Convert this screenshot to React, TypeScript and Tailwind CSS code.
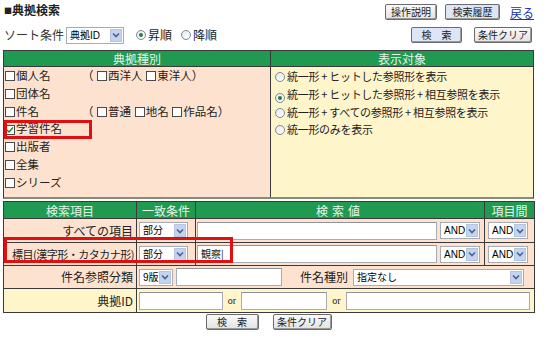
import React from 'react';

const jp = { fontFamily: '"Noto Sans CJK JP", "DejaVu Sans", sans-serif' };
const small = { fontFamily: '"Liberation Sans", "Noto Sans CJK JP", sans-serif' };

function Btn({ label, blue, className = '' }: { label: string; blue?: boolean; className?: string }) {
  return (
    <button
      className={`h-[16px] border border-[#6b6b6b] rounded-[2px] text-[10px] leading-[14px] text-[#222] shadow-[inset_-1px_-1px_0_#9a9a9a] ${
        blue ? 'bg-[#dce6f6]' : 'bg-gradient-to-b from-[#fafafa] to-[#e2e2e2]'
      } ${className}`}
    >
      {label}
    </button>
  );
}

function Sel({ label, w, className = '' }: { label: string; w: number; className?: string }) {
  return (
    <div
      className={`flex items-center h-[17px] border border-[#a5acb5] bg-white pl-[3px] pr-[1px] ${className}`}
      style={{ width: w }}
    >
      <span className="flex-1 text-[10px] leading-[15px] text-black whitespace-nowrap" style={small}>{label}</span>
      <span className="shrink-0 w-[12px] h-[13px] bg-[#c3d3f0] border border-[#b4c4e4] flex items-center justify-center">
        <svg width="8" height="6" viewBox="0 0 8 6">
          <path d="M1 1.5 L4 4.5 L7 1.5" stroke="#4d6185" strokeWidth="1.6" fill="none" />
        </svg>
      </span>
    </div>
  );
}

function Box({ checked }: { checked?: boolean }) {
  return (
    <span className="inline-flex w-[10px] h-[10px] border border-[#4a4a4a] bg-white ml-[1px] mr-[1px] items-center justify-center align-[-1px]">
      {checked && (
        <svg width="8" height="8" viewBox="0 0 8 8">
          <path d="M1 4 L3 6 L7 1.5" stroke="#1a8a2a" strokeWidth="1.5" fill="none" />
        </svg>
      )}
    </span>
  );
}

function Radio({ checked }: { checked?: boolean }) {
  return (
    <span className="inline-flex w-[10px] h-[10px] rounded-full border border-[#7a8a9a] bg-gradient-to-br from-[#e4e8ec] to-white mr-[2px] items-center justify-center align-[-1px]">
      {checked && <span className="w-[4px] h-[4px] rounded-full bg-[#2a7a4a]" />}
    </span>
  );
}

function Input({ w, value, className = '' }: { w: number; value?: string; className?: string }) {
  return (
    <div
      className={`shrink-0 h-[18px] border border-[#a5acb5] border-t-[#8d939a] bg-white text-[10px] leading-[16px] pl-[3px] ${className}`}
      style={{ width: w }}
    >
      {value}
    </div>
  );
}

export default function App() {
  return (
    <div className="w-[560px] h-[354px] bg-white text-[12px] text-[#222] relative" style={jp}>
      {/* title row */}
      <div className="flex items-start justify-between w-[534px] h-[24px] pl-[4px]">
        <div className="pt-[2px] text-[12px] font-bold leading-[16px] text-[#222]">
          <span className="text-[8px] align-[1px]">■</span>典拠検索
        </div>
        <div className="flex items-center pt-[3px] gap-[8px]">
          <Btn label="操作説明" className="w-[52px]" />
          <Btn label="検索履歴" blue className="w-[55px]" />
          <a className="text-[12px] text-[#1a33b0] underline leading-[16px] ml-[2px] mt-[2px]">戻る</a>
        </div>
      </div>

      {/* sort row */}
      <div className="flex items-center w-[532px] h-[22px] pl-[4px]">
        <span className="w-[62px] text-[12px] text-[#333]">ソート条件</span>
        <Sel label="典拠ID" w={58} />
        <span className="ml-[12px] flex items-center"><Radio checked />昇順</span>
        <span className="ml-[9px] flex items-center"><Radio />降順</span>
        <div className="ml-auto flex gap-[12px]">
          <Btn label="検　索" blue className="w-[51px]" />
          <Btn label="条件クリア" className="w-[58px]" />
        </div>
      </div>

      {/* top table */}
      <div className="ml-[3px] mt-[4px] w-[531px] border border-[#3a3a3a] border-b-[#8a8a7a] border-b-2 flex">
        <div className="w-[267px] border-r border-[#3a3a3a] bg-[#fde3cf]">
          <div className="h-[16px] bg-[#1f9a50] text-[#e6f4e6] text-center leading-[16px] border-b border-[#3a3a3a]">典拠種別</div>
          <div className="h-[130px] leading-[17.8px] text-[11.5px]">
            <div className="flex"><span className="w-[78px]"><Box />個人名</span><span>（ <Box />西洋人 <Box />東洋人）</span></div>
            <div><Box />団体名</div>
            <div className="flex"><span className="w-[78px]"><Box />件名</span><span>（ <Box />普通 <Box />地名 <Box />作品名）</span></div>
            <div><Box checked />学習件名</div>
            <div><Box />出版者</div>
            <div><Box />全集</div>
            <div><Box />シリーズ</div>
          </div>
        </div>
        <div className="flex-1 bg-[#fff5cb]">
          <div className="h-[16px] bg-[#1f9a50] text-[#e6f4e6] text-center leading-[16px] border-b border-[#3a3a3a]">表示対象</div>
          <div className="pt-[1px] pl-[4px] leading-[17.8px] text-[11px] tracking-[-0.3px]">
            <div><Radio />統一形 + ヒットした参照形を表示</div>
            <div><Radio checked />統一形 + ヒットした参照形 + 相互参照を表示</div>
            <div><Radio />統一形 + すべての参照形 + 相互参照を表示</div>
            <div><Radio />統一形のみを表示</div>
          </div>
        </div>
      </div>

      {/* bottom table */}
      <table className="ml-[3px] mt-[2px] w-[531px] border-collapse border border-[#3a3a3a] table-fixed">
        <colgroup>
          <col className="w-[133px]" />
          <col className="w-[59px]" />
          <col className="w-[289px]" />
          <col className="w-[50px]" />
        </colgroup>
        <thead>
          <tr className="h-[17px] bg-[#1f9a50] text-[#e6f4e6] text-center leading-[15px]">
            <th className="font-normal border border-[#3a3a3a] p-0">検索項目</th>
            <th className="font-normal border border-[#3a3a3a] p-0">一致条件</th>
            <th className="font-normal border border-[#3a3a3a] p-0 tracking-[4px]">検索値</th>
            <th className="font-normal border border-[#3a3a3a] p-0">項目間</th>
          </tr>
        </thead>
        <tbody>
          <tr className="h-[24px] bg-[#fde3cf]">
            <td className="border border-[#3a3a3a] text-right pr-[3px]">すべての項目</td>
            <td className="border border-[#3a3a3a] pl-[2px]"><Sel label="部分" w={49} /></td>
            <td className="border border-[#3a3a3a] pl-[1px]">
              <div className="flex items-center gap-[3px]"><Input w={240} /><Sel label="AND" w={40} /></div>
            </td>
            <td className="border border-[#3a3a3a] pl-[3px]"><Sel label="AND" w={40} /></td>
          </tr>
          <tr className="h-[23px] bg-[#fde3cf]">
            <td className="border border-[#3a3a3a] text-right pr-[2px] whitespace-nowrap text-[11px] tracking-[-0.5px]">標目(漢字形・カタカナ形)</td>
            <td className="border border-[#3a3a3a] pl-[2px]"><Sel label="部分" w={49} /></td>
            <td className="border border-[#3a3a3a] pl-[1px]">
              <div className="flex items-center gap-[3px]"><Input w={240} value="観察|" /><Sel label="AND" w={40} /></div>
            </td>
            <td className="border border-[#3a3a3a] pl-[3px]"><Sel label="AND" w={40} /></td>
          </tr>
          <tr className="h-[23px] bg-[#fde3cf]">
            <td className="border border-[#3a3a3a] text-right pr-[3px]">件名参照分類</td>
            <td colSpan={3} className="border border-[#3a3a3a] pl-[2px]">
              <div className="flex items-center">
                <Sel label="9版" w={34} />
                <Input w={106} className="ml-[3px]" />
                <span className="ml-[18px] w-[53px]">件名種別</span>
                <Sel label="指定なし" w={171} />
              </div>
            </td>
          </tr>
          <tr className="h-[24px] bg-[#fff5cb]">
            <td className="border border-[#3a3a3a] text-right pr-[3px]">典拠ID</td>
            <td colSpan={3} className="border border-[#3a3a3a] pl-[2px]">
              <div className="flex items-center">
                <Input w={84} />
                <span className="w-[18px] text-center text-[10px]" style={{ fontFamily: '"Liberation Serif", serif' }}>or</span>
                <Input w={86} />
                <span className="w-[19px] text-center text-[10px]" style={{ fontFamily: '"Liberation Serif", serif' }}>or</span>
                <Input w={184} />
              </div>
            </td>
          </tr>
        </tbody>
      </table>

      <div className="ml-[3px] w-[531px] flex justify-center gap-[14px] mt-[1px]">
        <Btn label="検　索" className="w-[53px]" />
        <Btn label="条件クリア" className="w-[59px]" />
      </div>

      {/* red highlight boxes */}
      <div className="absolute left-[4px] top-[120px] w-[88px] h-[19px] border-[3px] border-[#e01010]" />
      <div className="absolute left-[4px] top-[237px] w-[229px] h-[26px] border-[3px] border-[#e01010]" />
    </div>
  );
}
